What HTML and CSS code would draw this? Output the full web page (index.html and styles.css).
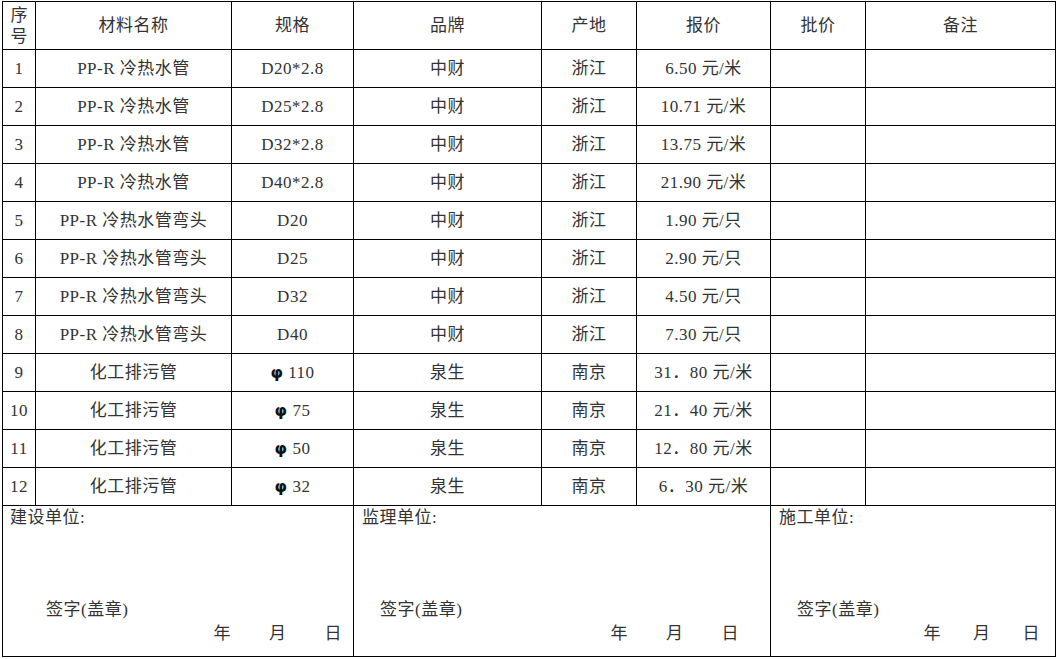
FILE: index.html
```html
<!DOCTYPE html>
<html lang="zh-CN">
<head>
<meta charset="utf-8">
<title>材料报价表</title>
<link rel="stylesheet" href="styles.css">
</head>
<body>
<div class="sheet">
  <div class="grid">
    <div class="c h no">序号</div>
    <div class="c h">材料名称</div>
    <div class="c h">规格</div>
    <div class="c h">品牌</div>
    <div class="c h">产地</div>
    <div class="c h">报价</div>
    <div class="c h">批价</div>
    <div class="c h">备注</div>

    <div class="c">1</div><div class="c">PP-R 冷热水管</div><div class="c">D20*2.8</div><div class="c">中财</div><div class="c">浙江</div><div class="c">6.50 元/米</div><div class="c"></div><div class="c"></div>
    <div class="c">2</div><div class="c">PP-R 冷热水管</div><div class="c">D25*2.8</div><div class="c">中财</div><div class="c">浙江</div><div class="c">10.71 元/米</div><div class="c"></div><div class="c"></div>
    <div class="c">3</div><div class="c">PP-R 冷热水管</div><div class="c">D32*2.8</div><div class="c">中财</div><div class="c">浙江</div><div class="c">13.75 元/米</div><div class="c"></div><div class="c"></div>
    <div class="c">4</div><div class="c">PP-R 冷热水管</div><div class="c">D40*2.8</div><div class="c">中财</div><div class="c">浙江</div><div class="c">21.90 元/米</div><div class="c"></div><div class="c"></div>
    <div class="c">5</div><div class="c">PP-R 冷热水管弯头</div><div class="c">D20</div><div class="c">中财</div><div class="c">浙江</div><div class="c">1.90 元/只</div><div class="c"></div><div class="c"></div>
    <div class="c">6</div><div class="c">PP-R 冷热水管弯头</div><div class="c">D25</div><div class="c">中财</div><div class="c">浙江</div><div class="c">2.90 元/只</div><div class="c"></div><div class="c"></div>
    <div class="c">7</div><div class="c">PP-R 冷热水管弯头</div><div class="c">D32</div><div class="c">中财</div><div class="c">浙江</div><div class="c">4.50 元/只</div><div class="c"></div><div class="c"></div>
    <div class="c">8</div><div class="c">PP-R 冷热水管弯头</div><div class="c">D40</div><div class="c">中财</div><div class="c">浙江</div><div class="c">7.30 元/只</div><div class="c"></div><div class="c"></div>
    <div class="c">9</div><div class="c">化工排污管</div><div class="c"><span><span class="phi">φ</span> 110</span></div><div class="c">泉生</div><div class="c">南京</div><div class="c">31．80 元/米</div><div class="c"></div><div class="c"></div>
    <div class="c">10</div><div class="c">化工排污管</div><div class="c"><span><span class="phi">φ</span> 75</span></div><div class="c">泉生</div><div class="c">南京</div><div class="c">21．40 元/米</div><div class="c"></div><div class="c"></div>
    <div class="c">11</div><div class="c">化工排污管</div><div class="c"><span><span class="phi">φ</span> 50</span></div><div class="c">泉生</div><div class="c">南京</div><div class="c">12．80 元/米</div><div class="c"></div><div class="c"></div>
    <div class="c">12</div><div class="c">化工排污管</div><div class="c"><span><span class="phi">φ</span> 32</span></div><div class="c">泉生</div><div class="c">南京</div><div class="c">6．30 元/米</div><div class="c"></div><div class="c"></div>

    <div class="c sign s1">
      <div class="org">建设单位:</div>
      <div class="seal">签字(盖章)</div>
      <div class="date"><span>年</span><span>月</span><span>日</span></div>
    </div>
    <div class="c sign s2">
      <div class="org">监理单位:</div>
      <div class="seal">签字(盖章)</div>
      <div class="date"><span>年</span><span>月</span><span>日</span></div>
    </div>
    <div class="c sign s3">
      <div class="org">施工单位:</div>
      <div class="seal">签字(盖章)</div>
      <div class="date"><span>年</span><span>月</span><span>日</span></div>
    </div>
  </div>
</div>
</body>
</html>
```
FILE: styles.css
```css
html, body {
  margin: 0;
  padding: 0;
  background: #fff;
}

body {
  font-family: "Liberation Serif", "Noto Sans CJK SC", serif;
  font-size: 17px;
  color: #333;
}

.sheet {
  padding: 1px 0 0 2px;
}

.grid {
  display: grid;
  grid-template-columns: 33px 196px 122px 188px 95px 134px 95px 190px;
  grid-template-rows: 48px repeat(12, 38px) 151px;
  width: 1054px;
  border-left: 1px solid #000;
  border-top: 1px solid #000;
  box-sizing: border-box;
}

.c {
  box-sizing: border-box;
  border-right: 1px solid #000;
  border-bottom: 1px solid #000;
  display: flex;
  align-items: center;
  justify-content: center;
  text-align: center;
  white-space: nowrap;
  line-height: 21px;
  letter-spacing: 0.5px;
}

.h.no {
  white-space: normal;
  padding: 0 1px;
  line-height: 21px;
  letter-spacing: 0;
}

.phi {
  font-family: "DejaVu Sans", sans-serif;
  font-weight: bold;
  font-size: 16px;
  color: #111;
}

.sign {
  display: flex;
  flex-direction: column;
  align-items: stretch;
  justify-content: flex-start;
  text-align: left;
  padding: 0 0 0 7px;
}

.s1 { grid-column: 1 / 4; }
.s2 { grid-column: 4 / 7; padding-left: 8px; }
.s3 { grid-column: 7 / 9; padding-left: 8px; }

.org {
  line-height: 22px;
  margin-top: 1px;
}

.seal {
  line-height: 22px;
  margin-top: 70px;
  padding-left: 36px;
}

.s2 .seal, .s3 .seal {
  padding-left: 18px;
}

.date {
  display: flex;
  justify-content: flex-end;
  gap: 38px;
  line-height: 22px;
  margin-top: 2px;
  padding-right: 11px;
}

.s2 .date {
  padding-right: 31px;
}

.s3 .date {
  gap: 32px;
  padding-right: 15px;
}
```
